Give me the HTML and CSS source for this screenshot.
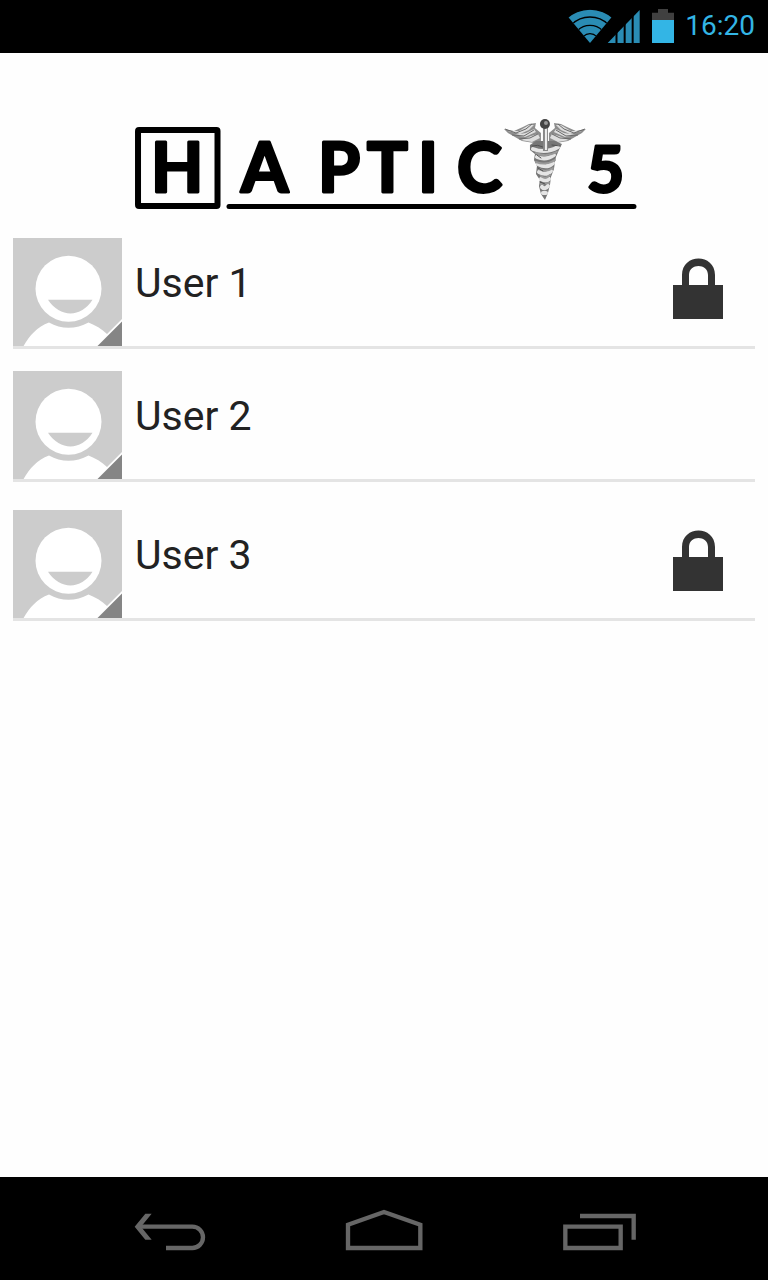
FILE: index.html
```html
<!DOCTYPE html>
<html lang="en">
<head>
<meta charset="utf-8">
<meta name="viewport" content="width=device-width, initial-scale=1">
<title>Haptic 5</title>
<link rel="stylesheet" href="styles.css">
</head>
<body>
<div class="screen">
  <header class="status-bar">
    <svg class="wifi-icon" viewBox="30 24 132 108" aria-hidden="true">
      <defs><clipPath id="fan"><path d="M96 129L30 50Q96 6 162 50Z"/></clipPath></defs>
      <g clip-path="url(#fan)">
        <circle class="signal" cx="96" cy="129" r="100"/>
        <g class="wifi-gap"><circle cx="96" cy="129" r="78"/><circle cx="96" cy="129" r="53"/><circle cx="96" cy="129" r="28"/></g>
      </g>
    </svg>
    <svg class="cell-icon" viewBox="148 24 102 108" aria-hidden="true">
      <path class="signal" d="M150 129L246 30V129Z"/>
      <path class="cell-gap" d="M176.500 24V132M201 24V132M225 24V132"/>
    </svg>
    <svg class="battery-icon" viewBox="282 24 66 108" aria-hidden="true">
      <path fill="#404040" d="M282 38H300V27H330V38H348V61H282Z"/>
      <path fill="#33b5e5" d="M282 60H348V129H282Z"/>
    </svg>
    <time class="clock">16:20</time>
  </header>
  <main class="content">
    <h1 class="brand">
      <svg class="logo" viewBox="128 112 512 104" role="img" aria-label="Haptic 5">
        <rect class="logo-box" x="138" y="130" width="79.500" height="76" rx="1"/>
        <path class="logo-line" d="M229 206.500H634"/>
        <text class="logo-text" y="192" x="151 241 318 367 418 457 500">HAPTIC <tspan class="logo-digit" x="587">5</tspan></text>
        <g class="caduceus">
          <g id="wing">
            <path fill="#8d8d8d" d="M541 141L534 143L522 141L515 137L508 133L504 129L514 131L523 127L529 124L536 123L535 128L541 133Z"/>
            <path fill="#dedede" d="M508 131L519 131L529 125L534 125L529 130L520 134ZM514 135L526 133L534 129L536 132L525 137ZM521 140L531 136L538 134L540 138L532 142Z"/>
            <path stroke="#686868" d="M505 129L516 133L526 129L532 124M512 135L524 136L534 130M519 139L530 138L538 134" fill="none"/>
          </g>
          <use href="#wing" transform="matrix(-1 0 0 1 1090 0)"/>
          <path fill="#777" d="M530 145L536 141H555L562 144L559 150L556 157L555 162L554 169L551 177L550 185L548 193L545 200L541 194L539 186L540 180L536 174L537 166L534 160L535 154L530 150Z"/>
          <g fill="none" stroke-linecap="round">
            <path stroke="#e5e5e5" stroke-width="4" d="M533 149Q546 154 558 147M537 157Q546 161 554 155M538 164Q547 169 553 163M539 172Q546 176 551 171M541 179Q546 182 549 179M542 187Q545 190 548 186M543 193H546"/>
            <path stroke="#999" stroke-width="2" d="M536 153Q546 158 557 152M536 162Q546 166 555 160M539 169Q546 173 553 168M541 176Q546 180 550 175M541 184L549 183"/>
            <path stroke="#505050" stroke-width="1" d="M532 146Q538 144 543 147M552 145L560 146M537 155L541 158M538 168L543 171M540 182L545 184"/>
          </g>
          <path fill="#888" d="M543 127H548V151H543Z"/>
          <path fill="#eee" d="M545 128H547V150H545Z"/>
          <circle cx="545" cy="124" r="5" fill="#444"/>
          <circle cx="546" cy="123" r="2" fill="#999"/>
        </g>
      </svg>
    </h1>
    <svg class="symbols" aria-hidden="true">
      <symbol id="avatar" viewBox="0 0 109 108">
        <path fill="#ccc" d="M0 0H109V109H0Z"/>
        <circle cx="55.500" cy="50.700" r="33" fill="#fff"/>
        <path fill="#ccc" d="M35 61.700H79.500C68 80 47 80 35 61.700Z"/>
        <path fill="#fff" d="M10 109C16 98 24 89 36 84.500C48 91.500 63 91.500 75.500 84.500C82 87 89 91 94 96L109 81V109Z"/>
        <path fill="#858585" d="M109 83.500V109H83.500Z"/>
      </symbol>
      <symbol id="lock" viewBox="0 0 50 61">
        <path fill="#333" d="M0 27H9V17C9-5 42-5 42 17V27H50V61H0ZM16 27H35V17C35 5 16 5 16 17Z"/>
      </symbol>
    </svg>
    <ul class="users">
      <li class="user">
        <svg class="avatar" aria-hidden="true"><use href="#avatar"/></svg>
        <span class="name">User 1</span>
        <svg class="lock" role="img" aria-label="Locked"><use href="#lock"/></svg>
      </li>
      <li class="user">
        <svg class="avatar" aria-hidden="true"><use href="#avatar"/></svg>
        <span class="name">User 2</span>
      </li>
      <li class="user user-last">
        <svg class="avatar" aria-hidden="true"><use href="#avatar"/></svg>
        <span class="name">User 3</span>
        <svg class="lock" role="img" aria-label="Locked"><use href="#lock"/></svg>
      </li>
    </ul>
  </main>
  <nav class="nav-bar" aria-label="System">
    <button class="nav-button" type="button" aria-label="Back">
      <svg class="nav-icon" viewBox="30 114 240 132"><path d="M60 170H217A32 32 0 0 1 217 234H138"/><path class="solid" d="M44 170L76 131H95L63 170L95 209H76Z"/></svg>
    </button>
    <button class="nav-button" type="button" aria-label="Home">
      <svg class="nav-icon" viewBox="672 114 240 132"><path d="M684 234V164L792 126L901 164V234Z"/></svg>
    </button>
    <button class="nav-button" type="button" aria-label="Recent apps">
      <svg class="nav-icon" viewBox="354 114 240 132"><path d="M376 170H542V234H376ZM420 138H581V209"/></svg>
    </button>
  </nav>
</div>
</body>
</html>
```
FILE: styles.css
```css
* { box-sizing: border-box; }

body {
  margin: 0;
  background: #fefefe;
  color: #222;
  font-family: Roboto, "Noto Sans", sans-serif;
}

.screen {
  display: flex;
  flex-direction: column;
  min-height: 100vh;
}

.status-bar {
  display: flex;
  align-items: center;
  justify-content: flex-end;
  height: 53px;
  padding: 0 13px 2px;
  background: #000;
}

.wifi-icon { width: 44px; height: 36px; margin-right: -5px; }
.cell-icon { width: 34px; height: 36px; }
.battery-icon { width: 22px; height: 36px; margin: 0 11px; }
.signal { fill: #2a8cb4; }
.wifi-gap { fill: none; stroke: #000; stroke-width: 4; }
.cell-gap { fill: none; stroke: #000; stroke-width: 6; }

.clock {
  color: #33b5e5;
  font-size: 28px;
  line-height: 36px;
}

.content { flex: 1; padding: 59px 13px 0; }

.brand { margin: 0 0 22px; font-size: 16px; line-height: 0; }
.logo { display: block; width: 69%; margin: 0 auto; }
.logo-box { fill: none; stroke: #000; stroke-width: 6; }
.logo-line { stroke: #000; stroke-width: 5; stroke-linecap: round; }
.logo-text {
  fill: #000;
  stroke: #000;
  stroke-width: 3;
  stroke-linejoin: round;
  font-family: Lato, sans-serif;
  font-size: 68px;
  font-weight: 700;
}
.logo-digit { font-size: 64px; }

.symbols { display: none; }

.users {
  display: flex;
  flex-direction: column;
  gap: 22px;
  margin: 0;
  padding: 0;
  list-style: none;
}

.user {
  display: flex;
  align-items: flex-start;
  border-bottom: 3px solid #e4e4e4;
}

.user-last { margin-top: 6px; }
.avatar { flex: none; width: 109px; height: 108px; }

.name {
  flex: 1;
  padding: 21px 0 0 13px;
  font-size: 41px;
  line-height: 48px;
}

.lock { flex: none; width: 50px; height: 61px; margin: 20px 32px 0 0; }

.nav-bar {
  display: flex;
  height: 103px;
  padding: 3px 63px 0;
  background: #000;
}

.nav-button {
  display: flex;
  flex: 1;
  align-items: center;
  justify-content: center;
  padding: 0;
  border: 0;
  background: none;
}

.nav-icon {
  width: 80px;
  height: 44px;
  fill: none;
  stroke: #666;
  stroke-width: 13;
}

.solid { fill: #666; stroke: none; }
```
